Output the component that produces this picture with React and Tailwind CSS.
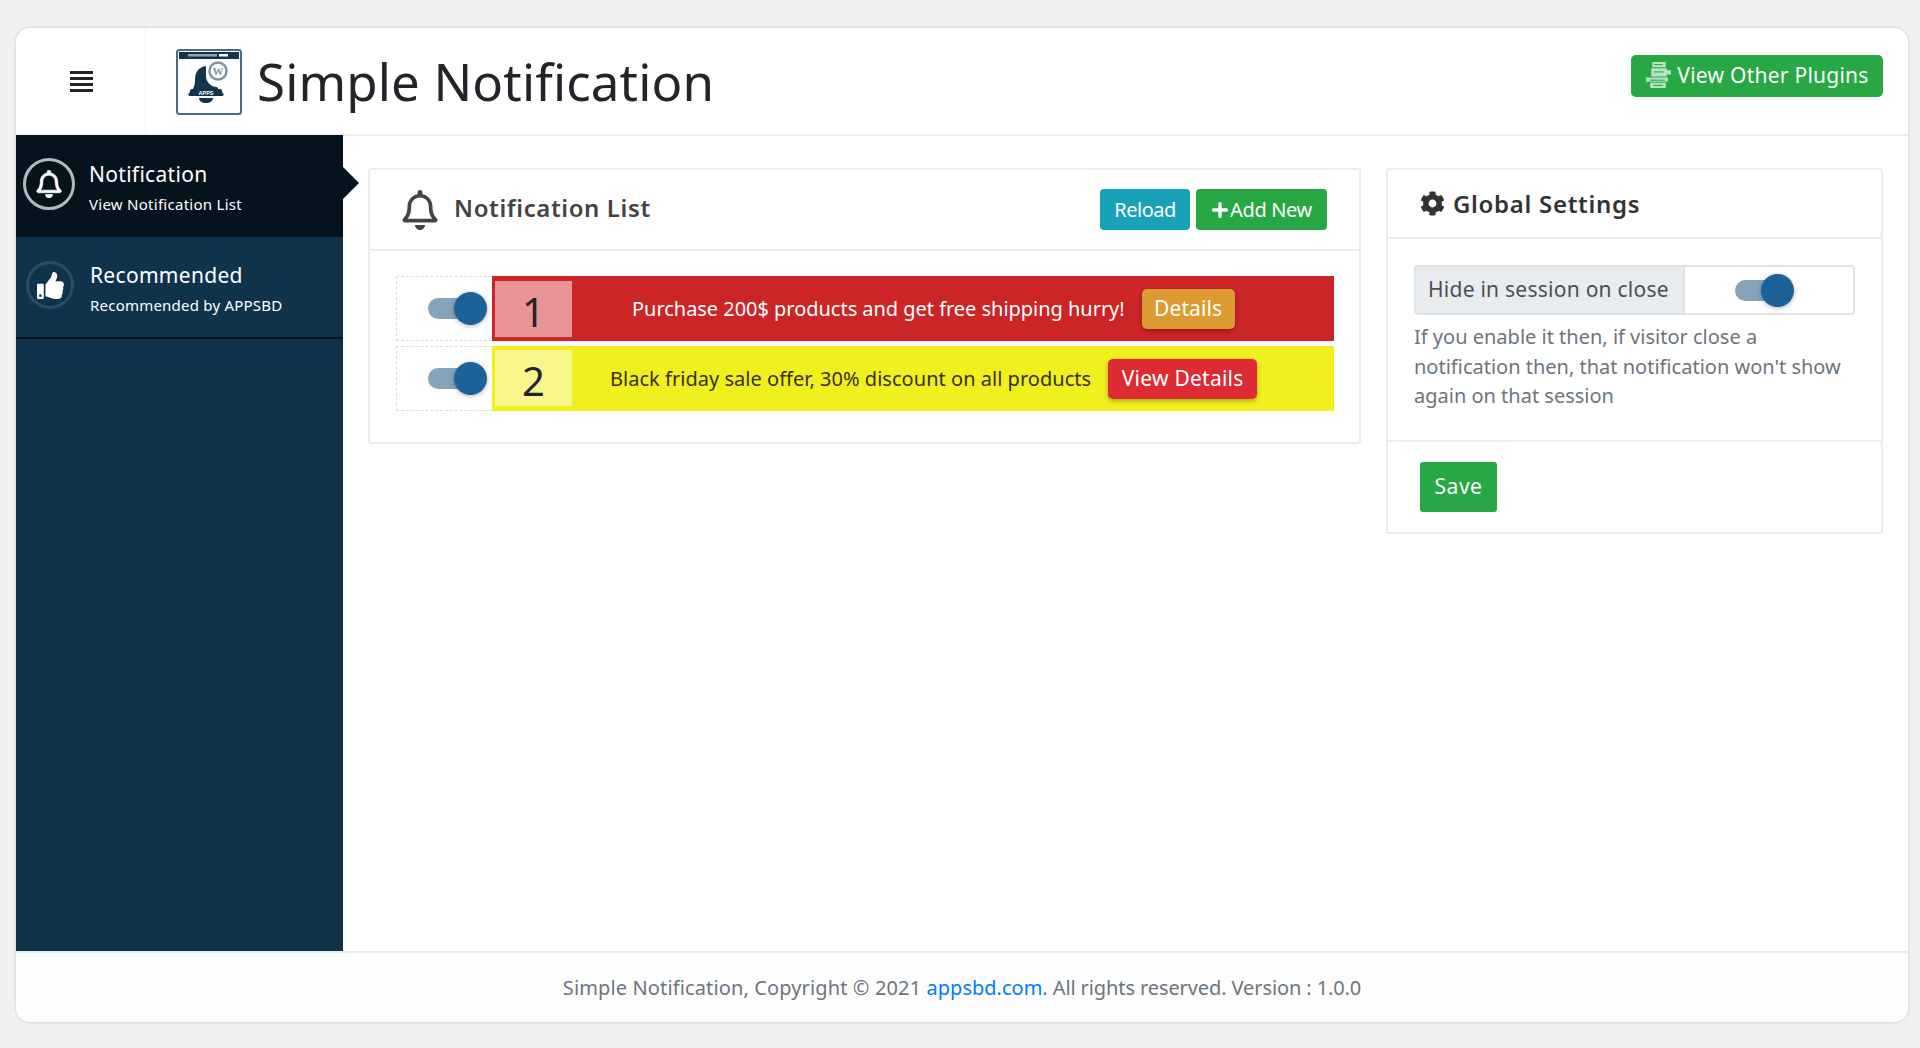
import React from "react";
import { FaRegBell, FaCog, FaPlus, FaThumbsUp } from "react-icons/fa";

function Toggle() {
  return (
    <div className="relative w-[59px] h-[33px] shrink-0">
      <div className="absolute left-0 top-[6px] w-[50px] h-[21px] rounded-full bg-[#85a3bb]" />
      <div className="absolute right-0 top-0 w-[33px] h-[33px] rounded-full bg-[#1c6298] shadow-[0_1px_5px_rgba(0,0,0,0.3)]" />
    </div>
  );
}

function Logo() {
  return (
    <svg width="66" height="66" viewBox="0 0 66 66" className="shrink-0">
      <rect x="1" y="1" width="64" height="64" rx="2.5" fill="#fff" stroke="#4a6a80" strokeWidth="2" />
      <rect x="3" y="3" width="60" height="7" fill="#12344d" />
      <rect x="12" y="5" width="29" height="2.5" fill="#8fa3b2" />
      <rect x="43" y="5" width="9" height="2.5" fill="#fff" />
      <path d="M30 17c-8 1-11 7-11 14 0 6-2 10-6 13-1 1-1 3 1 3h32c2 0 2-2 1-3-3-2-5-4-6-6-6 0-11-5-11-11 0-4 0-8 0-10z" fill="#12344d" />
      <rect x="14" y="40" width="32" height="7" rx="2" fill="#12344d" />
      <text x="30" y="46" textAnchor="middle" fontSize="5.5" fontWeight="700" fill="#fff" fontFamily="Liberation Sans, sans-serif">APPS</text>
      <path d="M23 49h14c0 3-3 5-7 5s-7-2-7-5z" fill="#12344d" />
      <circle cx="42" cy="22" r="8.5" fill="#fff" stroke="#7d95a7" strokeWidth="2.5" />
      <text x="42" y="26" textAnchor="middle" fontSize="11" fontWeight="700" fill="#7d95a7" fontFamily="Liberation Serif, serif">W</text>
    </svg>
  );
}

function PluginIcon() {
  return (
    <svg width="27" height="27" viewBox="0 0 26 26" className="shrink-0" fill="#b7e4c2">
      <path d="M7 0h13v5H7z" />
      <path d="M6 6h15v2h4v4h-4v2H6z" />
      <path d="M1 15h21v4H1z" />
      <path d="M5 20h15v5H5z" />
      <rect x="9" y="2" width="8" height="1" fill="#28a745" />
      <rect x="9" y="9" width="9" height="1" fill="#28a745" />
      <rect x="5" y="17" width="14" height="1" fill="#28a745" />
      <rect x="8" y="22" width="9" height="1" fill="#28a745" />
    </svg>
  );
}

export default function App() {
  return (
    <div className="h-[1048px] bg-[#f0f0f0] pt-[28px] pl-[16px] pr-[12px] pb-[26px] overflow-hidden" style={{ fontFamily: '"Noto Sans", "Open Sans", sans-serif' }}>
      <div className="h-full rounded-[14px] bg-white shadow-[0_0_3px_rgba(0,0,0,0.2)] flex flex-col overflow-hidden">
        {/* header */}
        <header className="h-[108px] shrink-0 flex items-center border-b-2 border-[#ececec]">
          <div className="w-[130px] h-full flex items-center justify-center border-r border-[#f4f4f4] pl-[2px] pt-[1px]">
            <div className="w-[23px] flex flex-col gap-[3px]">
              <span className="h-[3px] bg-[#212529]" />
              <span className="h-[3px] bg-[#212529]" />
              <span className="h-[3px] bg-[#212529]" />
              <span className="h-[3px] bg-[#212529]" />
            </div>
          </div>
          <div className="ml-[30px] mt-[2px]"><Logo /></div>
          <h1 className="ml-[15px] text-[51px] leading-none text-[#212529] tracking-[0.15px] whitespace-nowrap">Simple Notification</h1>
          <button className="ml-auto mr-[25px] mb-[11px] h-[42px] w-[252px] rounded-[5px] bg-[#28a745] text-white text-[21px] tracking-[0.25px] flex items-center justify-center gap-[5px]">
            <PluginIcon />View Other Plugins
          </button>
        </header>

        <div className="flex-1 flex min-h-0">
          {/* sidebar */}
          <aside className="w-[327px] shrink-0 -mt-[1px] bg-[#0f334b] text-white">
            <div className="relative h-[102px] bg-[#04131c] flex items-center pl-[7px]">
              <div className="w-[52px] h-[52px] mb-[4px] rounded-full border-[3px] border-[#b5b9bc] flex items-center justify-center">
                <FaRegBell className="text-[28px] stroke-white stroke-[12px]" />
              </div>
              <div className="ml-[14px] mt-[2px]">
                <div className="text-[21px] leading-[28px] tracking-[0.3px]">Notification</div>
                <div className="text-[15px] leading-[22px] mt-[5px] tracking-[0.27px]">View Notification List</div>
              </div>
              <div className="absolute left-full top-[32px] w-0 h-0 border-y-[16px] border-y-transparent border-l-[16px] border-l-[#04131c]" />
            </div>
            <div className="h-[102px] flex items-center pl-[10px] border-b-2 border-[#04131c]">
              <div className="w-[48px] h-[48px] mb-[4px] rounded-full border-[3px] border-[#2a4d66] flex items-center justify-center">
                <FaThumbsUp className="text-[27px]" />
              </div>
              <div className="ml-[16px] mt-[2px]">
                <div className="text-[21px] leading-[28px] tracking-[0.3px]">Recommended</div>
                <div className="text-[15px] leading-[22px] mt-[5px] tracking-[0.22px]">Recommended by APPSBD</div>
              </div>
            </div>
          </aside>

          {/* main */}
          <main className="flex-1 flex items-start gap-[25px] pl-[25px] pr-[25px] pt-[32px]">
            <section className="w-[993px] h-[276px] shrink-0 border-2 border-[#ececec] rounded-[3px] flex flex-col">
              <div className="h-[81px] shrink-0 flex items-center border-b-2 border-[#ececec] pl-[30px] pr-[32px]">
                <FaRegBell className="text-[40px] text-[#444444]" />
                <h2 className="ml-[14px] mb-[4px] text-[24px] font-semibold text-[#444444] tracking-[0.6px]">Notification List</h2>
                <button className="ml-auto w-[90px] h-[41px] rounded-[4px] bg-[#17a2b8] text-white text-[20px] tracking-[-0.5px]">Reload</button>
                <button className="ml-[6px] w-[131px] h-[41px] rounded-[4px] bg-[#28a745] text-white text-[20px] tracking-[-0.35px] flex items-center justify-center gap-[1px]"><FaPlus className="text-[18px]" />Add New</button>
              </div>
              <div className="pt-[25px] pl-[26px] pr-[25px] flex flex-col gap-[5px]">
                <div className="flex h-[65px]">
                  <div className="w-[96px] shrink-0 flex items-center justify-end pr-[5px] border border-dashed border-[#dddddd] border-r-0">
                    <Toggle />
                  </div>
                  <div className="flex-1 flex items-center relative bg-[#cb2527]">
                    <div className="absolute left-[3px] top-[5px] w-[77px] h-[56px] flex items-center justify-center text-[40px] leading-none pt-[6px] text-[#212529] bg-[#e89396]">1</div>
                    <span className="ml-[140px] text-[20px] tracking-[-0.03px] whitespace-nowrap text-white">Purchase 200$ products and get free shipping hurry!</span>
                    <span className="ml-[17px] w-[93px] h-[40px] flex items-center justify-center rounded-[5px] text-white text-[21px] tracking-[0.1px] bg-[#dd9a30] shadow-[0_2px_5px_rgba(0,0,0,0.3)]">Details</span>
                  </div>
                </div>
                <div className="flex h-[65px]">
                  <div className="w-[96px] shrink-0 flex items-center justify-end pr-[5px] border border-dashed border-[#dddddd] border-r-0">
                    <Toggle />
                  </div>
                  <div className="flex-1 flex items-center relative bg-[#f0f01e]">
                    <div className="absolute left-[3px] top-[4px] w-[77px] h-[56px] flex items-center justify-center text-[40px] leading-none pt-[6px] text-[#212529] bg-[#f7f78b]">2</div>
                    <span className="ml-[118px] text-[20px] tracking-[0.03px] whitespace-nowrap text-[#33330a]">Black friday sale offer, 30% discount on all products</span>
                    <span className="ml-[17px] w-[149px] h-[40px] flex items-center justify-center rounded-[5px] text-white text-[21px] tracking-[0.25px] bg-[#dc2b33] shadow-[0_2px_5px_rgba(0,0,0,0.3)]">View Details</span>
                  </div>
                </div>
              </div>
            </section>

            <section className="w-[497px] h-[366px] shrink-0 border-2 border-[#ececec] rounded-[3px] flex flex-col">
              <div className="h-[69px] shrink-0 flex items-center gap-[8px] border-b-2 border-[#ececec] pl-[32px]">
                <FaCog className="text-[25px] text-[#333333]" />
                <h2 className="text-[24px] font-semibold text-[#333333] tracking-[0.7px]">Global Settings</h2>
              </div>
              <div className="h-[203px] shrink-0 border-b-2 border-[#ececec] pl-[26px] pr-[26px] pt-[26px]">
                <div className="flex h-[50px] border-2 border-[#dfe3e8] rounded-[4px]">
                  <div className="w-[269px] bg-[#e9ecef] border-r-2 border-[#dfe3e8] flex items-center pl-[12px] text-[21px] text-[#495057] tracking-[0.25px] whitespace-nowrap">Hide in session on close</div>
                  <div className="flex-1 flex items-center pl-[50px]"><Toggle /></div>
                </div>
                <p className="mt-[7px] text-[20px] leading-[29.5px] text-[#6c757d] whitespace-nowrap">If you enable it then, if visitor close a<br />notification then, that notification won't show<br />again on that session</p>
              </div>
              <div className="pl-[32px] pt-[20px]">
                <button className="w-[77px] h-[50px] rounded-[3px] bg-[#28a745] text-white text-[21px] tracking-[0.5px]">Save</button>
              </div>
            </section>
          </main>
        </div>

        {/* footer */}
        <footer className="h-[71px] shrink-0 border-t-2 border-[#ececec] flex items-center justify-center text-[20px] text-[#6c757d] bg-[#fdfdfd]">
          <span><span className="tracking-[0.13px]">Simple Notification, Copyright © 2021 </span><a className="text-[#007bff]">appsbd.com</a><span className="tracking-[-0.1px]">. All rights reserved. Version : 1.0.0</span></span>
        </footer>
      </div>
    </div>
  );
}
